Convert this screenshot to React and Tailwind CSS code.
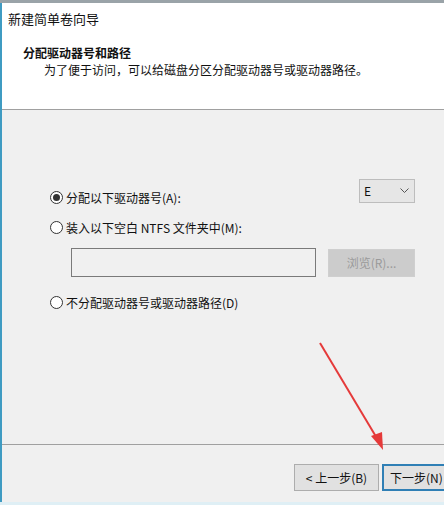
import React from 'react';

const font = { fontFamily: '"Noto Sans CJK SC", "Liberation Sans", sans-serif' };

const Radio = ({ checked, label, className = '' }) => (
    <div className={`flex items-center gap-[3px] ${className}`}>
        <span className="w-[13px] h-[13px] rounded-full border border-[#333] bg-white flex items-center justify-center">
            {checked && <span className="w-[7px] h-[7px] rounded-full bg-[#333]" />}
        </span>
        <span className="text-[12px] text-[#111] leading-none">{label}</span>
    </div>
);

export default function App() {
    return (
        <div className="relative w-[444px] h-[505px] overflow-hidden flex flex-col bg-[#f0f0f0]" style={font}>
            <div className="h-[3px] bg-[#9aa3a8] shrink-0" />
            <div className="flex flex-1 min-h-0">
                <div className="w-[2px] bg-[#3f9bc2] shrink-0" />
                <div className="flex-1 flex flex-col min-w-0">
                    {/* header */}
                    <div className="h-[107px] bg-white border-b border-[#a0a0a0] shrink-0">
                        <div className="pl-[6px] pt-[8px] text-[13px] text-[#111] leading-[16px]">新建简单卷向导</div>
                        <div className="pl-[21px] pt-[18px] text-[12px] font-bold text-[#111] leading-[16px]">分配驱动器号和路径</div>
                        <div className="pl-[42px] pt-[1px] text-[12px] text-[#111] leading-[16px]">为了便于访问，可以给磁盘分区分配驱动器号或驱动器路径。</div>
                    </div>

                    {/* body */}
                    <div className="h-[334px] shrink-0 pl-[48px] pr-[29px] pt-[69px]">
                        <div className="flex items-start justify-between">
                            <Radio checked label="分配以下驱动器号(A):" className="mt-[12px]" />
                            <div className="w-[56px] h-[24px] border border-[#bdbdbd] bg-[#e6e6e6] flex items-center justify-between pl-[4px] pr-[5px]">
                                <span className="text-[12px] text-[#111]">E</span>
                                <svg width="9" height="6" viewBox="0 0 9 6"><path d="M0.5 0.5 L4.5 4.5 L8.5 0.5" fill="none" stroke="#555" strokeWidth="1" /></svg>
                            </div>
                        </div>
                        <Radio label="装入以下空白 NTFS 文件夹中(M):" className="mt-[17px]" />
                        <div className="flex items-center justify-between mt-[14px] pl-[21px]">
                            <div className="w-[245px] h-[29px] border border-[#7a7a7a] bg-[#f0f0f0]" />
                            <div className="w-[87px] h-[28px] border border-[#cfcfcf] bg-[#cccccc] flex items-center justify-center text-[12px] text-[#9a9a9a]">浏览(R)...</div>
                        </div>
                        <Radio label="不分配驱动器号或驱动器路径(D)" className="mt-[19px]" />
                    </div>

                    {/* footer */}
                    <div className="flex-1 border-t border-[#a0a0a0] flex justify-end items-start pt-[19px]">
                        <div className="flex gap-[3px] -mr-[10px]">
                            <div className="w-[85px] h-[27px] border border-[#adadad] bg-[#e1e1e1] flex items-center justify-center text-[12px] text-[#111]">&lt; 上一步(B)</div>
                            <div className="w-[72px] h-[27px] border-2 border-[#2f7fb5] bg-[#e1e1e1] flex items-center pl-[6px] text-[12px] text-[#111]">下一步(N)</div>
                        </div>
                    </div>
                </div>
            </div>
            <div className="h-[3px] bg-[#dfeff5] shrink-0" />

            {/* red annotation arrow */}
            <svg className="absolute left-0 top-0 pointer-events-none" width="444" height="505">
                <line x1="320" y1="343" x2="378" y2="440" stroke="#e53a3a" strokeWidth="2" />
                <polygon points="383,450 371,436 382,432" fill="#e53a3a" />
            </svg>
        </div>
    );
}
